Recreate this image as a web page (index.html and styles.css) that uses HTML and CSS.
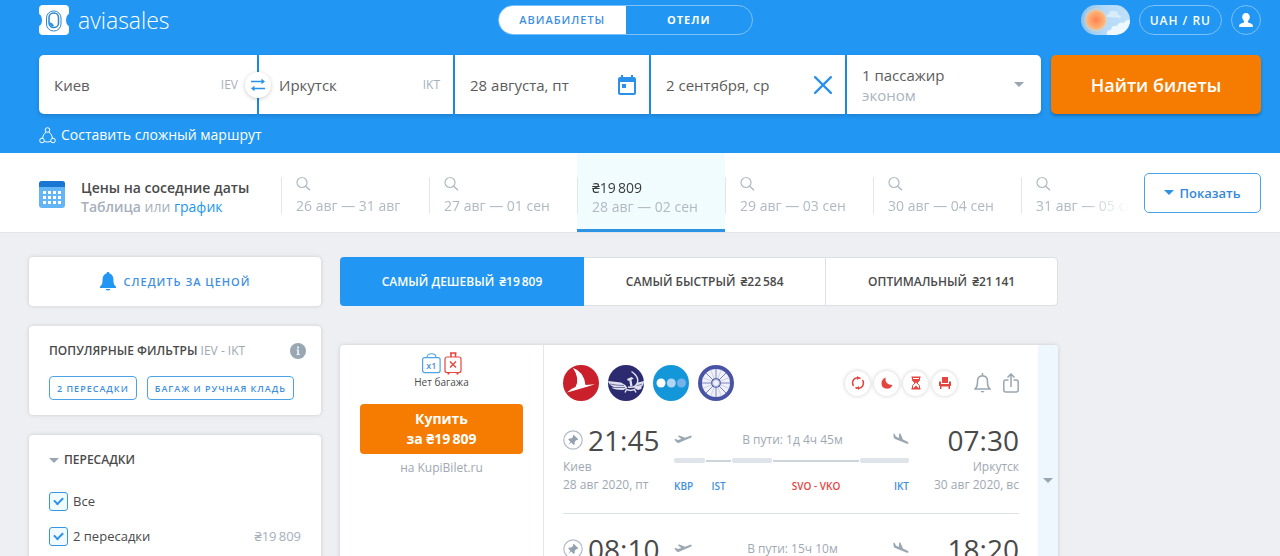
FILE: index.html
```html
<!DOCTYPE html>
<html lang="ru">

<head>
  <meta charset="UTF-8">
  <meta name="viewport" content="width=device-width, initial-scale=1.0">
  <title>Aviasales</title>
  <link rel="stylesheet" href="styles.css">
</head>

<body>
  <!-- shared icons -->
  <svg class="sprite" aria-hidden="true">
    <symbol id="search" viewBox="0 0 16 16">
      <circle cx="6" cy="6.5" r="5" fill="none" stroke="currentColor" stroke-width="1.2" />
      <path d="M9.7 10.2L14 14.3" fill="none" stroke="currentColor" stroke-width="1.5" />
    </symbol>
    <symbol id="pin" viewBox="0 0 20 20">
      <circle cx="10" cy="10" r="9.2" fill="none" stroke="#b4bcc8" stroke-width="1.2" />
      <path d="M10.6 4.8l4.7 4.5-1.2 .9-.8-.2-1.7 1.9.2 2-1.1 1.1-2.4-2.4-3.2 2.5 2.4-3.3-2.3-2.3 1.1-1.1 2 .1 1.9-1.8-.4-.9z" fill="#93a0ae" />
    </symbol>
    <symbol id="takeoff" viewBox="0 0 18 12">
      <path d="M.3 5.4l1.3-.5 2.500 1.200 3.200-1L3.700 2l1.700-.6 5.600 2.400 4.100-1.600c1.200-.5 2.300-.4 2.600.1.3.6-.5 1.300-1.600 1.800L5.100 8.800c-.9.3-1.700.2-2.300-.3z" fill="#9ba8b4" />
    </symbol>
    <symbol id="landing" viewBox="0 0 16 13">
      <path d="M.4.4l1.300.5 1.200 2.700 3 1.300L6.100.3l1.500.7 2.400 5.500 4.100 1.900c1.200.5 1.800 1.300 1.500 1.900-.3.6-1.200.6-2.300.1L2.100 5.900C1.200 5.500.7 4.900.6 4z" fill="#9ba8b4" />
    </symbol>
  </svg>

  <header class="header">
    <div class="topbar">
      <a class="logo" href="#">
        <svg width="30" height="30" viewBox="0 0 30 30" aria-hidden="true">
          <path d="M4 0h22a4 4 0 0 1 4 4v4q0 1.500-1.500 2-1.500 2-1.500 5t1.500 5q1.500.5 1.500 2v4a4 4 0 0 1-4 4H4a4 4 0 0 1-4-4v-4q0-1.500 1.500-2Q3 18 3 15t-1.500-5Q0 9.500 0 8V4a4 4 0 0 1 4-4z" fill="#fff" />
          <rect x="7.500" y="6" width="14.500" height="20" rx="7" fill="none" stroke="#2f86cd" stroke-width="1" />
          <rect x="10" y="8" width="9.500" height="14.500" rx="4.600" fill="none" stroke="#2f86cd" stroke-width="1.500" />
          <path d="M10.500 17q3 .5 4.500 3.500l-2 1.500q-2.500-1.500-2.500-5z" fill="#2196f3" />
        </svg>
        <span>aviasales</span>
      </a>
      <nav class="switcher">
        <a class="switcher-item active" href="#">АВИАБИЛЕТЫ</a>
        <a class="switcher-item" href="#">ОТЕЛИ</a>
      </nav>
      <div class="user-menu">
        <button class="theme" aria-label="Тема">
          <svg width="49" height="30" viewBox="0 0 49 30" aria-hidden="true">
            <defs>
              <clipPath id="pill"><rect width="49" height="30" rx="15" /></clipPath>
              <radialGradient id="sun"><stop offset="0" stop-color="#ff8052" /><stop offset="1" stop-color="#ffbd7d" /></radialGradient>
              <linearGradient id="sky"><stop offset="0" stop-color="#8fc1e8" /><stop offset=".5" stop-color="#b5daf8" /><stop offset="1" stop-color="#c0e0fa" /></linearGradient>
            </defs>
            <g clip-path="url(#pill)">
              <rect width="49" height="30" fill="url(#sky)" />
              <path d="M25 12q0-3 3-3 1-4 5-3 4 0 4 4 3 0 3 3z" fill="#d9ecfb" />
              <path d="M26 30q-1-5 4-5 1-5 6-4 2-5 7-3 1-3 7-3v15z" fill="#eff8ff" />
              <circle cx="15" cy="15" r="12" fill="#d5d6cf" opacity=".5" />
              <circle cx="15" cy="15" r="10" fill="url(#sun)" />
            </g>
          </svg>
        </button>
        <button class="pill">UAH / RU</button>
        <button class="pill profile" aria-label="Профиль">
          <svg width="14" height="14" viewBox="0 0 14 14" aria-hidden="true">
            <path d="M7 0c2.400 0 3.800 1.700 3.800 4 0 1.700-.8 3.200-1.900 4v1.200c.2.8 4.900 1 4.900 3.400V14H.2v-1.400c0-2.400 4.700-2.600 4.900-3.400V8C4 7.200 3.200 5.700 3.200 4 3.200 1.700 4.600 0 7 0z" fill="#fff" />
          </svg>
        </button>
      </div>
    </div>

    <form class="search-form">
      <div class="field origin">
        <input type="text" value="Киев" aria-label="Откуда">
        <span class="iata">IEV</span>
        <button class="swap" type="button" aria-label="Поменять местами">
          <svg width="14" height="14" viewBox="0 0 14 14" aria-hidden="true">
            <path d="M0 3.500h12M2 10.500h12" stroke="#2a91ea" stroke-width="1.500" />
            <path d="M10.500 .8L14 3.500l-3.500 2.700zM3.500 7.800L0 10.500l3.500 2.700z" fill="#2a91ea" />
          </svg>
        </button>
      </div>
      <div class="field destination">
        <input type="text" value="Иркутск" aria-label="Куда">
        <span class="iata">IKT</span>
      </div>
      <div class="field">
        <input type="text" value="28 августа, пт" aria-label="Когда">
        <svg width="18" height="20" viewBox="0 0 18 20" aria-hidden="true">
          <path d="M2 2h1V0h2v2h8V0h2v2h1a2 2 0 0 1 2 2v14a2 2 0 0 1-2 2H2a2 2 0 0 1-2-2V4a2 2 0 0 1 2-2zm0 5v11h14V7z" fill="#2a91ea" fill-rule="evenodd" />
          <path d="M4 9h4v4H4z" fill="#2a91ea" />
        </svg>
      </div>
      <div class="field">
        <input type="text" value="2 сентября, ср" aria-label="Обратно">
        <svg width="18" height="18" viewBox="0 0 16 16" aria-hidden="true">
          <path d="M1 1l14 14M15 1L1 15" stroke="#2a91ea" stroke-width="2" stroke-linecap="round" />
        </svg>
      </div>
      <button class="field passengers" type="button">
        <span>1 пассажир<small>эконом</small></span>
        <i class="caret"></i>
      </button>
      <button class="submit" type="submit">Найти билеты</button>
    </form>

    <a class="multi" href="#">
      <svg width="17" height="17" viewBox="0 0 17 17" fill="none" stroke="#fff" stroke-width="1" aria-hidden="true">
        <circle cx="8.500" cy="3" r="2.300" />
        <circle cx="3" cy="13.500" r="2.300" />
        <circle cx="14" cy="13.500" r="2.300" />
        <path d="M7 5q-3 2.500-3.500 6M10 5q3 2.500 3.500 6M5.300 14.500q3.200 1 6.400 0" />
      </svg>
      <span>Составить сложный маршрут</span>
    </a>
  </header>

  <section class="calendar">
    <div class="calendar-info">
      <svg width="26" height="27" viewBox="0 0 26 27" aria-hidden="true">
        <rect width="26" height="27" rx="3" fill="#64b5f6" />
        <path d="M3 0h20a3 3 0 0 1 3 3v3H0V3a3 3 0 0 1 3-3z" fill="#1976d2" />
        <path d="M4 11.500h18M4 16.500h18M4 21.500h18" stroke="#fff" stroke-width="3" stroke-dasharray="3 2" />
      </svg>
      <div class="calendar-text">
        <h2>Цены на соседние даты</h2>
        <p><b>Таблица</b> или <a href="#">график</a></p>
      </div>
    </div>
    <div class="dates">
      <a class="date" href="#"><svg width="16" height="16"><use href="#search" /></svg><span>26 авг — 31 авг</span></a>
      <a class="date" href="#"><svg width="16" height="16"><use href="#search" /></svg><span>27 авг — 01 сен</span></a>
      <a class="date current" href="#"><strong>₴19&thinsp;809</strong><span>28 авг — 02 сен</span></a>
      <a class="date" href="#"><svg width="16" height="16"><use href="#search" /></svg><span>29 авг — 03 сен</span></a>
      <a class="date" href="#"><svg width="16" height="16"><use href="#search" /></svg><span>30 авг — 04 сен</span></a>
      <a class="date" href="#"><svg width="16" height="16"><use href="#search" /></svg><span>31 авг — 05 сен</span></a>
    </div>
    <button class="show"><i class="caret"></i>Показать</button>
  </section>

  <main class="content">
    <aside class="sidebar">
      <button class="card subscribe">
        <svg width="16" height="19" viewBox="0 0 16 19" aria-hidden="true">
          <path d="M8 0c.9 0 1.500.6 1.500 1.400 2.600.8 3.900 3 3.900 5.600 0 4.500.7 6 2.600 7.500V16H0v-1.500C1.900 13 2.600 11.500 2.600 7c0-2.600 1.300-4.800 3.900-5.600C6.500.6 7.100 0 8 0zM5.500 17h5Q9.700 18.600 8 18.600T5.500 17z" fill="#2196f3" />
        </svg>
        СЛЕДИТЬ ЗА ЦЕНОЙ
      </button>

      <div class="card popular">
        <div class="card-head">
          <h3>ПОПУЛЯРНЫЕ ФИЛЬТРЫ <span>IEV - IKT</span></h3>
          <svg width="16" height="16" viewBox="0 0 16 16" aria-hidden="true">
            <circle cx="8" cy="8" r="8" fill="#98a7b2" />
            <path d="M7 3.500h2v2H7zM6.500 6.500H9V11h1v1H6.500v-1h.7V7.500h-.7z" fill="#e4eef6" />
          </svg>
        </div>
        <div class="tags">
          <button class="tag">2 ПЕРЕСАДКИ</button>
          <button class="tag">БАГАЖ И РУЧНАЯ КЛАДЬ</button>
        </div>
      </div>

      <div class="card stops">
        <h3><i class="caret"></i>ПЕРЕСАДКИ</h3>
        <label class="check"><input type="checkbox" checked>Все</label>
        <label class="check"><input type="checkbox" checked>2 пересадки<span>₴19&thinsp;809</span></label>
      </div>
    </aside>

    <div class="results">
      <div class="sorting">
        <button class="sort active">САМЫЙ ДЕШЕВЫЙ <span>₴19&thinsp;809</span></button>
        <button class="sort">САМЫЙ БЫСТРЫЙ <span>₴22&thinsp;584</span></button>
        <button class="sort">ОПТИМАЛЬНЫЙ <span>₴21&thinsp;141</span></button>
      </div>

      <article class="ticket">
        <div class="offer">
          <svg width="40" height="23" viewBox="0 0 40 23" aria-hidden="true">
            <g fill="none" stroke="#4da3e6" stroke-width="1.200">
              <rect x=".6" y="5.600" width="17.500" height="15" rx="2" />
              <path d="M5 5.500C5 .5 14 .5 14 5.500" />
            </g>
            <text x="9.300" y="16.500" class="bag-count">x1</text>
            <g fill="none" stroke="#e5453f" stroke-width="1.200">
              <rect x="23" y="5" width="16" height="15.500" rx="2" />
              <path d="M29 5V1M33.500 5V1M28 1h6.500" stroke-width="1.600" />
              <path d="M26.500 20.500v2M35.500 20.500v2" stroke-width="2" />
              <path d="M28 9.500l6 6M34 9.500l-6 6" stroke-width="1.400" />
            </g>
          </svg>
          <p class="baggage">Нет багажа</p>
          <button class="buy">Купить<br>за ₴19&thinsp;809</button>
          <p class="agency">на KupiBilet.ru</p>
        </div>

        <div class="flight">
          <div class="flight-head">
            <div class="airlines">
              <svg width="36" height="36" viewBox="0 0 36 36" aria-hidden="true">
                <circle cx="18" cy="18" r="18" fill="#c9202c" />
                <path d="M10 3Q21 6.500 22.500 20l9.500-.8Q20 23 4 27.500q4-4 8.500-5.500Q17 13.500 10 3z" fill="#fff" />
              </svg>
              <svg width="36" height="36" viewBox="0 0 36 36" aria-hidden="true">
                <circle cx="18" cy="18" r="18" fill="#2c2b70" />
                <g fill="#dfe1ef">
                  <path d="M0 16l13 1.500Q17 19 19.500 23L15 25Q7 25 3.500 22.800L6 22Q1 20.500 0 16z" />
                  <path d="M36 16l-6 1.500Q28 20 26 23l4 2q3-.5 4-2l-1-1q3-2 3-6z" />
                  <path d="M19 14l4.500-2 2.300 1.500-2.300 1.200 1 6.300-2.200.4-1-6-1.300.5z" />
                </g>
                <path d="M2 19q7 1.500 14 1.500M5 22.500h12M34 19q-3 1.500-6 1.500" fill="none" stroke="#2c2b70" stroke-width=".6" />
                <path d="M23.500 6.500q7.500 5 6 11-2 6-9.500 4.500M17 27.500l1.500-3 4 1 4-1 1.500 3" fill="none" stroke="#dfe1ef" stroke-width="1.500" />
              </svg>
              <svg width="36" height="36" viewBox="0 0 36 36" aria-hidden="true">
                <circle cx="18" cy="18" r="18" fill="#1497d8" />
                <circle cx="8" cy="18" r="4.500" fill="#fff" />
                <circle cx="18.300" cy="18" r="4.500" fill="#b0d5f4" />
                <circle cx="28.500" cy="18" r="4.500" fill="#75b2ea" />
              </svg>
              <svg width="36" height="36" viewBox="0 0 36 36" aria-hidden="true">
                <circle cx="18" cy="18" r="18" fill="#4854a3" />
                <circle cx="18" cy="18" r="9.500" fill="none" stroke="#eff0f8" stroke-width="9" />
                <path d="M18 4v28M4 18h28M8 8l20 20M28 8L8 28" stroke="#7c85bf" stroke-width="1" />
                <path d="M12.500 4.500l11 27M4.500 12.500l27 11M23.500 4.500l-11 27M31.500 12.500l-27 11" stroke="#aab0d8" stroke-width=".5" />
                <circle cx="18" cy="18" r="3.500" fill="#eff0f8" stroke="#a3a9d3" />
              </svg>
            </div>
            <div class="warnings">
              <span class="warning">
                <svg width="14" height="14" viewBox="0 0 14 14" fill="none" stroke="#e5453f" stroke-width="1.600" aria-hidden="true">
                  <path d="M6 1.800Q1.700 2.500 1.600 7q0 1.800 1 3M8 12.200q4.300-.7 4.400-5.200 0-1.800-1-3M4.500 11.300q.8.700 1.800.9M9.500 2.700q-.8-.7-1.800-.9" />
                  <path d="M6 0l3 1.900-3 2zM8 14l-3-1.900 3-2z" fill="#e5453f" stroke="none" />
                </svg>
              </span>
              <span class="warning">
                <svg width="12" height="12" viewBox="0 0 12 12" aria-hidden="true">
                  <path d="M4.500.5Q3.800 8 11.500 8q-1.300 3.700-5.300 3.700Q.5 11.500.5 6.200.6 2 4.500.5z" fill="#e5453f" />
                </svg>
              </span>
              <span class="warning">
                <svg width="10" height="14" viewBox="0 0 10 14" aria-hidden="true">
                  <path d="M.5 1.300h9M.5 12.700h9" stroke="#e5453f" stroke-width="1.600" />
                  <path d="M1.500 2v2.300L4 7 1.500 9.700V12M8.500 2v2.300L6 7l2.500 2.700V12" fill="none" stroke="#e5453f" />
                  <path d="M1.500 3h7v1.500L5 7.300 1.500 4.500zM2.500 12L5 9.500 7.500 12z" fill="#e5453f" />
                </svg>
              </span>
              <span class="warning">
                <svg width="12" height="12" viewBox="0 0 12 12" aria-hidden="true">
                  <path d="M3 0h6v6H3zM0 4.500h2V7h8V4.500h2V9h-1v3H9.500V9.500h-7V12H1V9H0z" fill="#e5453f" />
                </svg>
              </span>
            </div>
            <div class="actions">
              <button aria-label="Подписаться">
                <svg width="17" height="20" viewBox="0 0 17 20" fill="none" stroke="#98a6b1" stroke-width="1.500" aria-hidden="true">
                  <path d="M8.500 0v2.500M1 16q2.500-2 2.500-6.500V8q0-5 5-5.300 5 .3 5 5.300v1.500q0 4.500 2.500 6.500z" />
                  <path d="M6.500 18h4q-.8 1.500-2 1.500T6.500 18z" fill="#98a6b1" stroke="none" />
                </svg>
              </button>
              <button aria-label="Поделиться">
                <svg width="16" height="20" viewBox="0 0 16 20" fill="none" stroke="#98a6b1" stroke-width="1.500" aria-hidden="true">
                  <path d="M5.500 7H2.800Q.8 7 .8 9v8q0 2 2 2h10.400q2 0 2-2V9q0-2-2-2h-2.700M8 14V1.500M4.500 4.500L8 1l3.500 3.500" />
                </svg>
              </button>
            </div>
          </div>

          <div class="leg">
            <div class="point">
              <div class="time"><svg width="20" height="20"><use href="#pin" /></svg>21:45</div>
              <p>Киев</p>
              <p>28 авг 2020, пт</p>
            </div>
            <div class="route">
              <div class="duration">
                <svg width="18" height="12"><use href="#takeoff" /></svg>
                <span>В пути: 1д 4ч 45м</span>
                <svg width="16" height="13"><use href="#landing" /></svg>
              </div>
              <div class="track">
                <i class="fly"></i><i class="stop"></i><i class="fly"></i><i class="stop"></i><i class="fly"></i>
                <span class="code from">KBP</span>
                <span class="code via">IST</span>
                <span class="code transfer">SVO - VKO</span>
                <span class="code to">IKT</span>
              </div>
            </div>
            <div class="point arrival">
              <div class="time">07:30</div>
              <p>Иркутск</p>
              <p>30 авг 2020, вс</p>
            </div>
          </div>

          <div class="leg">
            <div class="point">
              <div class="time"><svg width="20" height="20"><use href="#pin" /></svg>08:10</div>
            </div>
            <div class="route">
              <div class="duration">
                <svg width="18" height="12"><use href="#takeoff" /></svg>
                <span>В пути: 15ч 10м</span>
                <svg width="16" height="13"><use href="#landing" /></svg>
              </div>
            </div>
            <div class="point arrival">
              <div class="time">18:20</div>
            </div>
          </div>
        </div>

        <button class="expand" aria-label="Подробнее"><i class="caret"></i></button>
      </article>
    </div>
  </main>
</body>

</html>
```

FILE: styles.css
```css
* {
  box-sizing: border-box;
}

body {
  margin: 0;
  height: 100vh;
  overflow: hidden;
  background-color: #eeeff3;
  color: #4a4a4a;
  font-family: "Open Sans", "Noto Sans", sans-serif;
  font-size: 14px;
}

h2,
h3,
p {
  margin: 0;
}

a {
  color: #2196f3;
  text-decoration: none;
}

button,
input {
  font-family: inherit;
  font-size: inherit;
  color: inherit;
  margin: 0;
  padding: 0;
  border: none;
  background: none;
}

svg {
  display: block;
  flex-shrink: 0;
}

.sprite {
  position: absolute;
  width: 0;
  height: 0;
}

.caret {
  border: 5px solid transparent;
  border-top-color: #98a6b1;
  border-bottom: none;
}

/* header */
.header {
  background-color: #2196f3;
  padding: 5px 19px 8px 39px;
}

.topbar {
  display: grid;
  grid-template-columns: 459fr 255px 508fr;
  align-items: center;
  height: 30px;
}

.logo {
  display: flex;
  align-items: center;
  gap: 9px;
  color: #fff;
  font-size: 23px;
  font-weight: 300;
  line-height: 28px;
}

.switcher {
  display: flex;
  height: 30px;
  border: 1px solid #7cc1f8;
  border-radius: 15px;
  overflow: hidden;
}

.switcher-item {
  flex: 1;
  color: #fff;
  font-size: 11px;
  font-weight: 700;
  letter-spacing: 1px;
  line-height: 28px;
  text-align: center;
}

.switcher-item.active {
  background-color: #fff;
  color: #3f8fe0;
  font-weight: 600;
}

.user-menu {
  display: flex;
  justify-content: flex-end;
  gap: 9px;
}

.pill {
  height: 30px;
  padding: 0 10px;
  border: 1px solid #7cc1f8;
  border-radius: 15px;
  color: #fff;
  font-size: 12px;
  font-weight: 600;
  letter-spacing: 1px;
}

.profile {
  width: 30px;
  padding: 0 7px;
}

/* search form */
.search-form {
  display: grid;
  grid-template-columns: 218fr 194fr 194fr 194fr 194fr 218fr;
  gap: 2px;
  height: 59px;
  margin-top: 20px;
}

.field {
  display: flex;
  align-items: center;
  background-color: #fff;
  padding: 0 13px 0 15px;
  color: #5c5c5c;
  font-size: 15px;
  position: relative;
  min-width: 0;
  box-shadow: 0 2px 4px rgba(0, 0, 0, 0.15);
}

.field input {
  flex: 1;
  min-width: 0;
}

.origin {
  border-radius: 5px 0 0 5px;
  padding-right: 19px;
  z-index: 1;
}

.destination {
  padding-left: 20px;
}

.iata {
  color: #a6afbb;
  font-size: 12px;
}

.swap {
  position: absolute;
  right: -14px;
  display: flex;
  align-items: center;
  justify-content: center;
  width: 26px;
  height: 26px;
  border-radius: 50%;
  background-color: #fff;
  box-shadow: 0 1px 4px rgba(0, 0, 0, 0.2);
}

.passengers {
  justify-content: space-between;
  border-radius: 0 5px 5px 0;
  padding-right: 17px;
  text-align: left;
  line-height: 20px;
}

.passengers small {
  display: block;
  color: #a9b4be;
  font-size: 15px;
}

.submit {
  margin-left: 8px;
  border-radius: 5px;
  background-color: #f57c00;
  color: #fff;
  font-size: 18px;
  font-weight: 600;
  box-shadow: 0 2px 3px rgba(0, 0, 0, 0.25);
}

.multi {
  display: flex;
  align-items: center;
  gap: 5px;
  width: fit-content;
  margin-top: 11px;
  color: #fff;
  line-height: 20px;
}

/* neighbour dates */
.calendar {
  display: flex;
  align-items: center;
  height: 80px;
  padding: 0 19px 0 39px;
  background-color: #fff;
  border-bottom: 1px solid #e3e4e8;
}

.calendar-info {
  display: flex;
  align-items: center;
  gap: 16px;
  flex: 0 0 242px;
  padding-top: 4px;
  color: #a6afbb;
  line-height: 19px;
}

.calendar-text {
  padding-top: 5px;
}

.calendar-info h2 {
  color: #4a4a4a;
  font-size: 14px;
  font-weight: 600;
}

.calendar-info b {
  font-weight: 600;
}

.dates {
  display: flex;
  flex: 1;
  min-width: 0;
  height: 79px;
  overflow: hidden;
  -webkit-mask-image: linear-gradient(to left, transparent, #000 50px);
  mask-image: linear-gradient(to left, transparent, #000 50px);
}

.date {
  display: flex;
  flex-direction: column;
  justify-content: center;
  flex: 0 0 148px;
  padding: 6px 0 0 15px;
  color: #b1b9c3;
  line-height: 19px;
  white-space: nowrap;
  background: linear-gradient(#e3e6ea, #e3e6ea) left 24px / 1px 37px no-repeat;
}

.date svg {
  margin-bottom: 4px;
}

.date strong {
  color: #3a3a3a;
  font-weight: 400;
}

.date.current {
  background-color: #f1fcff;
  border-bottom: 3px solid #2d93e4;
  padding-top: 12px;
}

.show {
  display: flex;
  align-items: center;
  justify-content: center;
  gap: 5px;
  width: 117px;
  height: 40px;
  margin-left: 14px;
  border: 1px solid #4ba2e6;
  border-radius: 5px;
  color: #3487d8;
  font-size: 13px;
  font-weight: 600;
}

.show .caret {
  border-top-color: #2d93e4;
}

/* content */
.content {
  display: flex;
  gap: 19px;
  max-width: 1087px;
  padding: 24px 29px;
}

.sidebar {
  display: flex;
  flex-direction: column;
  gap: 20px;
  flex: 0 0 292px;
  min-width: 0;
}

.card {
  background-color: #fff;
  border-radius: 4px;
  box-shadow: 0 0 4px rgba(0, 0, 0, 0.15);
}

.card h3 {
  font-size: 12px;
  font-weight: 600;
  line-height: 20px;
}

.card h3 span {
  color: #a0a8b2;
  font-weight: 400;
}

.subscribe {
  display: flex;
  align-items: center;
  justify-content: center;
  gap: 8px;
  height: 49px;
  color: #3f8fe0;
  font-size: 11px;
  font-weight: 600;
  letter-spacing: 1px;
}

.popular {
  padding: 15px 15px 15px 20px;
}

.card-head {
  display: flex;
  align-items: center;
  justify-content: space-between;
}

.tags {
  display: flex;
  gap: 10px;
  margin-top: 15px;
}

.tag {
  height: 24px;
  padding: 0 7px;
  border: 1px solid #4ba2e6;
  border-radius: 4px;
  color: #3f8fe0;
  font-size: 9px;
  font-weight: 600;
  letter-spacing: 1px;
  white-space: nowrap;
}

.stops {
  padding: 15px 20px;
}

.stops h3 {
  display: flex;
  align-items: center;
  gap: 5px;
  margin-bottom: 21px;
}

.check {
  display: flex;
  align-items: center;
  gap: 5px;
  height: 20px;
  margin-bottom: 15px;
  font-size: 13px;
}

.check span {
  margin-left: auto;
  color: #a6afbb;
}

.check input {
  appearance: none;
  display: flex;
  align-items: center;
  justify-content: center;
  width: 19px;
  height: 19px;
  border: 1px solid #3597e4;
  border-radius: 3px;
  background-color: #f1fbff;
}

.check input:checked::after {
  content: "";
  width: 7px;
  height: 4px;
  margin-bottom: 2px;
  border: solid #2a91ea;
  border-width: 0 0 2px 2px;
  transform: rotate(-45deg);
}

/* results */
.results {
  flex: 1;
  min-width: 0;
}

.sorting {
  display: flex;
  height: 49px;
  border: 1px solid #dcdfe3;
  border-radius: 4px;
  background-color: #fff;
}

.sort {
  flex: 1 1 auto;
  font-size: 12px;
  font-weight: 600;
}

.sort + .sort + .sort {
  border-left: 1px solid #dcdfe3;
}

.sort span {
  margin-left: 2px;
}

.sort.active {
  margin: -1px 0 -1px -1px;
  border-radius: 4px 0 0 4px;
  background-color: #2196f3;
  color: #fff;
}

.ticket {
  display: flex;
  margin-top: 39px;
  background-color: #fff;
  border-radius: 4px;
  overflow: hidden;
  box-shadow: 0 0 4px rgba(0, 0, 0, 0.15);
}

.offer {
  flex: 0 0 204px;
  display: flex;
  flex-direction: column;
  align-items: center;
  padding: 7px 20px;
  border-right: 1px solid #e3e6ea;
}

.bag-count {
  fill: #4d8fdc;
  font-size: 9px;
  font-weight: 600;
  text-anchor: middle;
}

.baggage {
  font-size: 10px;
  line-height: 15px;
}

.buy {
  width: 100%;
  height: 50px;
  margin-top: 14px;
  border-radius: 4px;
  background-color: #f57c00;
  color: #fff;
  font-size: 14px;
  font-weight: 700;
  line-height: 20px;
}

.agency {
  margin-top: 5px;
  color: #a0a8b2;
  font-size: 12px;
  line-height: 18px;
}

.flight {
  flex: 1;
  min-width: 0;
  padding: 20px 19px 30px;
}

.flight-head {
  display: flex;
  align-items: center;
  height: 36px;
}

.airlines {
  display: flex;
  gap: 9px;
}

.warnings {
  display: flex;
  gap: 4px;
  margin-left: auto;
}

.warning {
  display: flex;
  align-items: center;
  justify-content: center;
  width: 25px;
  height: 25px;
  border-radius: 50%;
  box-shadow: 0 0 4px rgba(0, 0, 0, 0.2);
}

.actions {
  display: flex;
  gap: 12px;
  margin-left: 17px;
}

.leg {
  display: grid;
  grid-template-columns: 111px 1fr 110px;
  padding: 20px 0 18px;
}

.leg + .leg {
  border-top: 1px solid #dfe2e6;
  padding-top: 16px;
}

.point {
  color: #a0a8b2;
  font-size: 12px;
  line-height: 18px;
}

.arrival {
  text-align: right;
}

.time {
  display: flex;
  align-items: center;
  gap: 5px;
  height: 37px;
  color: #4a4a4a;
  font-size: 28px;
}

.arrival .time {
  justify-content: flex-end;
}

.duration {
  display: flex;
  align-items: center;
  justify-content: space-between;
  height: 37px;
  color: #a0a8b2;
  font-size: 12px;
}

.track {
  display: grid;
  grid-template-columns: 31fr 27fr 40fr 88fr 49fr;
  align-items: center;
  grid-template-rows: 5px 18px;
  row-gap: 14px;
}

.fly {
  height: 5px;
  border-radius: 2px;
  background-color: #dfe4eb;
}

.stop {
  height: 2px;
  margin: 0 1px;
  background-color: #cdd3db;
}

.code {
  grid-row: 2;
  color: #3f8fe0;
  font-size: 10px;
  font-weight: 600;
  white-space: nowrap;
}

.via {
  grid-column: 2;
  justify-self: center;
}

.transfer {
  grid-column: 4;
  justify-self: center;
  color: #e5453f;
}

.to {
  grid-column: 5;
  justify-self: end;
}

.expand {
  flex: 0 0 20px;
  display: flex;
  align-items: center;
  justify-content: center;
  background-color: #eff7fe;
}
```
